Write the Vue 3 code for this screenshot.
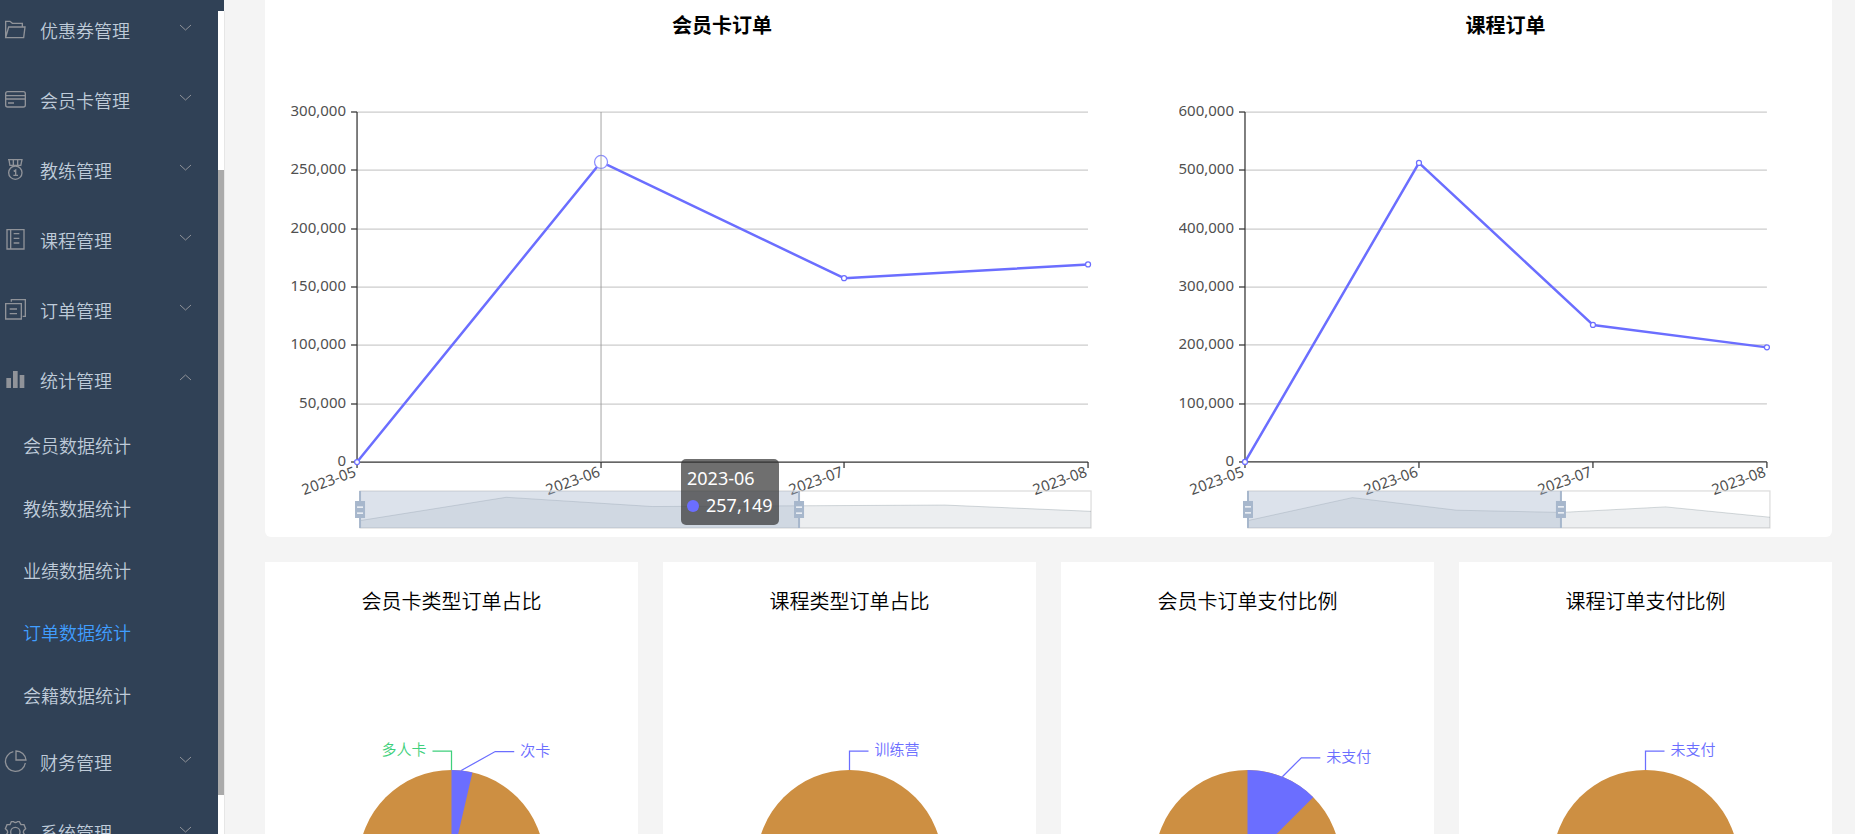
<script setup>
import { ref, computed, onMounted, onBeforeUnmount } from 'vue'

const groups = [
  { name: '优惠券管理', icon: 'folder' },
  { name: '会员卡管理', icon: 'card' },
  { name: '教练管理', icon: 'medal' },
  { name: '课程管理', icon: 'notebook' },
  { name: '订单管理', icon: 'documents' },
  {
    name: '统计管理',
    icon: 'bars',
    open: true,
    children: ['会员数据统计', '教练数据统计', '业绩数据统计', '订单数据统计', '会籍数据统计'],
  },
  { name: '财务管理', icon: 'pie' },
  { name: '系统管理', icon: 'gear' },
]
const activePage = '订单数据统计'

const months = ['2023-05', '2023-06', '2023-07', '2023-08']

const lineCharts = [
  {
    title: '会员卡订单',
    max: 300000,
    values: [0, 257149, 157600, 169300],
    overview: [0.2, 0.83, 0.58, 0.6, 0.62, 0.45],
    hover: 1,
  },
  {
    title: '课程订单',
    max: 600000,
    values: [0, 512700, 235000, 196500],
    overview: [0.2, 0.82, 0.48, 0.42, 0.57, 0.29],
    hover: -1,
  },
]

const BLUE = '#6b6eff'
const GREEN = '#3fd07c'
const pieCharts = [
  {
    title: '会员卡类型订单占比',
    share: 13,
    labels: [
      { text: '多人卡', color: GREEN, angle: 0, left: true },
      { text: '次卡', color: BLUE, angle: 6, reach: 34 },
    ],
  },
  { title: '课程类型订单占比', share: 0, labels: [{ text: '训练营', color: BLUE, angle: 0 }] },
  { title: '会员卡订单支付比例', share: 45, labels: [{ text: '未支付', color: BLUE, angle: 22, reach: 19 }] },
  { title: '课程订单支付比例', share: 0, labels: [{ text: '未支付', color: BLUE, angle: 0 }] },
]

const TOP = 73
const BOTTOM = 423
const SLIDER_TOP = 452
const SLIDER_HEIGHT = 37

const plotsWidth = ref(1567)
const plots = ref(null)
let observer
onMounted(() => {
  const measure = () => {
    plotsWidth.value = plots.value.clientWidth
  }
  measure()
  observer = new ResizeObserver(measure)
  observer.observe(plots.value)
})
onBeforeUnmount(() => observer.disconnect())

const lines = computed(() =>
  lineCharts.map((chart, index) => {
    const width = Math.round((plotsWidth.value * (index ? 5 : 7)) / 12)
    const left = Math.ceil(width / 10)
    const span = Math.round(width * 0.8)
    const right = left + span
    const points = chart.values.map((value, i) => ({
      x: Math.round(left + (span * i) / 3),
      y: BOTTOM - (value / chart.max) * (BOTTOM - TOP),
    }))
    const ticks = Array.from({ length: 7 }, (_, i) => ({
      text: ((chart.max / 6) * i).toLocaleString('en-US'),
      y: Math.round(BOTTOM - ((BOTTOM - TOP) * i) / 6),
    }))
    const sliderLeft = left + 3
    const bottom = SLIDER_TOP + SLIDER_HEIGHT
    const shape = chart.overview.map(
      (v, i) => `${sliderLeft + (span * i) / 5},${bottom - v * SLIDER_HEIGHT}`,
    )
    return {
      ...chart,
      width,
      left,
      right,
      span,
      points,
      ticks,
      sliderLeft,
      handles: [sliderLeft, Math.round(sliderLeft + span * 0.6)],
      path: points.map((p) => `${p.x},${p.y}`).join(' '),
      shape: shape.join(' '),
      area: `${sliderLeft},${bottom} ${shape.join(' ')} ${sliderLeft + span},${bottom}`,
    }
  }),
)

const RADIUS = 93
const PIE_Y = 248
const pies = computed(() => {
  const width = (plotsWidth.value - 75) / 4
  const cx = width / 2
  const edge = (angle) => {
    const a = (angle * Math.PI) / 180
    return { x: cx + RADIUS * Math.sin(a), y: PIE_Y - RADIUS * Math.cos(a) }
  }
  return pieCharts.map((pie) => {
    const end = edge(pie.share)
    return {
      ...pie,
      width,
      cx,
      slice: `M${cx} ${PIE_Y}V${PIE_Y - RADIUS}A${RADIUS} ${RADIUS} 0 0 1 ${end.x} ${end.y}Z`,
      labels: pie.labels.map((label) => {
        const start = edge(label.angle)
        const elbowX = start.x + (label.reach || 0)
        const elbowY = start.y - 19
        const stub = label.left ? -19 : 19
        return {
          ...label,
          line: `${start.x},${start.y} ${elbowX},${elbowY} ${elbowX + stub},${elbowY}`,
          x: elbowX + stub + (label.left ? -6 : 6),
          y: elbowY + 4,
        }
      }),
    }
  })
})
</script>

<template>
  <div class="shell">
    <aside class="sidebar">
      <nav class="menu">
        <div v-for="group in groups" :key="group.name">
          <button class="group" type="button" :aria-expanded="!!group.open">
            <svg class="icon" viewBox="0 0 72 72" aria-hidden="true">
              <g v-if="group.icon === 'folder'">
                <path d="M5 59V10H18L25 16H55V26M5 59L14 27H63L59 59Z" />
              </g>
              <g v-else-if="group.icon === 'card'">
                <rect x="5" y="11" width="59" height="46" rx="6" />
                <path d="M5 23H64M5 33H64M12 45H30" />
              </g>
              <g v-else-if="group.icon === 'medal'">
                <path d="M12 5H56M15 5L18 24M54 5L50 24M28 5V21M41 5V21M18 22H50M29 40L35 36V52M28 52H42" />
                <circle cx="34" cy="44" r="20" />
              </g>
              <g v-else-if="group.icon === 'notebook'">
                <path d="M9 5H60V63H9ZM20 5V63M29 17H46M29 31H46M29 45H46" />
              </g>
              <g v-else-if="group.icon === 'documents'">
                <path d="M22 11V5H64V55H56M5 17H52V63H5ZM17 33H39M17 47H39" />
              </g>
              <g v-else-if="group.icon === 'bars'" class="solid">
                <rect x="7" y="30" width="14" height="30" />
                <rect x="27" y="9" width="14" height="51" />
                <rect x="47" y="21" width="14" height="39" />
              </g>
              <g v-else-if="group.icon === 'pie'">
                <path d="M28 5A30 30 0 1 0 64 39M36 3V30H66A30 30 0 0 0 36 3Z" />
              </g>
              <g v-else>
                <path
                  d="M22 5H29Q34 10 40 5H46L51 14H60L65 26Q58 31 58 36Q58 41 65 46L60 58H51L46 67H40Q34 62 29 67H22L18 58H9L4 46Q11 41 11 36Q11 31 4 26L9 14H18Z"
                />
                <circle cx="34" cy="36" r="14" />
              </g>
            </svg>
            <span class="group-name">{{ group.name }}</span>
            <svg class="arrow" viewBox="0 0 15 15" aria-hidden="true">
              <path :d="group.open ? 'M2 10L7.5 5L13 10' : 'M2 5L7.5 10L13 5'" />
            </svg>
          </button>
          <div v-if="group.children" class="children">
            <a
              v-for="child in group.children"
              :key="child"
              class="child"
              :class="{ active: child === activePage }"
              href="#"
              >{{ child }}</a
            >
          </div>
        </div>
      </nav>
      <div class="gutter">
        <div class="track"><div class="thumb"></div></div>
      </div>
    </aside>

    <main class="content">
      <section ref="plots" class="plots">
        <article v-for="chart in lines" :key="chart.title" class="plot">
          <h2 class="plot-title">{{ chart.title }}</h2>
          <svg class="plot-canvas" :viewBox="`0 0 ${chart.width} 498`" role="img" :aria-label="chart.title">
            <line
              v-for="tick in chart.ticks.slice(1)"
              :key="tick.text"
              class="grid-line"
              :x1="chart.left"
              :x2="chart.right"
              :y1="tick.y"
              :y2="tick.y"
            />
            <g v-for="tick in chart.ticks" :key="'t' + tick.text">
              <line class="axis" :x1="chart.left - 6" :x2="chart.left" :y1="tick.y" :y2="tick.y" />
              <text class="tick-text" text-anchor="end" :x="chart.left - 11" :y="tick.y + 4">{{ tick.text }}</text>
            </g>
            <line class="axis" :x1="chart.left" :x2="chart.left" :y1="TOP" :y2="BOTTOM" />
            <line class="axis" :x1="chart.left" :x2="chart.right" :y1="BOTTOM" :y2="BOTTOM" />
            <g v-for="(month, i) in months" :key="month">
              <line class="axis" :x1="chart.points[i].x" :x2="chart.points[i].x" :y1="BOTTOM" :y2="BOTTOM + 6" />
              <text
                class="tick-text"
                text-anchor="end"
                :transform="`translate(${chart.points[i].x} ${BOTTOM + 14}) rotate(-20)`"
              >
                {{ month }}
              </text>
            </g>

            <polyline class="series" :points="chart.path" />
            <circle
              v-for="(point, i) in chart.points"
              :key="i"
              :class="['dot', { large: i === chart.hover }]"
              :cx="point.x"
              :cy="point.y"
              :r="i === chart.hover ? 6.5 : 2.5"
            />
            <line
              v-if="chart.hover >= 0"
              class="pointer"
              :x1="chart.points[chart.hover].x"
              :x2="chart.points[chart.hover].x"
              :y1="TOP"
              :y2="BOTTOM"
            />

            <rect class="slider-frame" :x="chart.sliderLeft" :y="SLIDER_TOP" :width="chart.span" :height="SLIDER_HEIGHT" />
            <polygon class="overview-area" :points="chart.area" />
            <polyline class="overview-line" :points="chart.shape" />
            <rect
              class="slider-range"
              :x="chart.sliderLeft"
              :y="SLIDER_TOP"
              :width="chart.handles[1] - chart.handles[0]"
              :height="SLIDER_HEIGHT"
            />
            <g v-for="x in chart.handles" :key="'h' + x">
              <rect class="handle" :x="x - 1" :y="SLIDER_TOP" width="2" :height="SLIDER_HEIGHT" />
              <rect class="handle" :x="x - 5" :y="SLIDER_TOP + 10" width="10" height="17" />
              <path class="grip" :d="`M${x - 3} ${SLIDER_TOP + 16}h6m-6 6h6`" />
            </g>
          </svg>
          <div v-if="chart.hover >= 0" class="tooltip" :style="{ left: chart.points[chart.hover].x + 80 + 'px' }">
            <div>{{ months[chart.hover] }}</div>
            <div class="tooltip-row">
              <span class="marker"></span>{{ chart.values[chart.hover].toLocaleString('en-US') }}
            </div>
          </div>
        </article>
      </section>

      <section class="pies">
        <article v-for="pie in pies" :key="pie.title" class="pie-card">
          <h2 class="pie-title">{{ pie.title }}</h2>
          <svg class="pie-canvas" :viewBox="`0 0 ${pie.width} 500`" role="img" :aria-label="pie.title">
            <circle class="pie-base" :cx="pie.cx" :cy="PIE_Y" :r="RADIUS" />
            <path v-if="pie.share" class="pie-slice" :d="pie.slice" />
            <g v-for="label in pie.labels" :key="label.text">
              <polyline class="leader" :points="label.line" :stroke="label.color" />
              <text
                class="pie-text"
                :text-anchor="label.left ? 'end' : 'start'"
                :x="label.x"
                :y="label.y"
                :fill="label.color"
              >
                {{ label.text }}
              </text>
            </g>
          </svg>
        </article>
      </section>
    </main>
  </div>
</template>

<style>
body {
  background: #f4f4f4;
}
</style>

<style scoped>
.shell {
  display: flex;
  height: 100vh;
  overflow: hidden;
  background: #f4f4f4;
  font-family: 'Noto Sans', 'Noto Sans CJK SC', sans-serif;
}

.sidebar {
  display: flex;
  flex: none;
  width: 224px;
  background: #304156;
}

.menu {
  flex: 1;
  margin-top: -5px;
}

.group {
  display: flex;
  align-items: center;
  width: 100%;
  height: 70px;
  padding: 0 25px 0 4px;
  border: 0;
  background: none;
  color: #bfcbd9;
  font-family: 'Noto Sans CJK SC', sans-serif;
  font-size: 18px;
  font-weight: 350;
  text-align: left;
  cursor: pointer;
}

.icon {
  flex: none;
  width: 24px;
  height: 24px;
  margin-right: 12px;
  fill: none;
  stroke: #909399;
  stroke-width: 4;
}

.solid {
  fill: #909399;
  stroke: none;
}

.group-name {
  flex: 1;
}

.arrow {
  width: 15px;
  height: 15px;
  margin-bottom: 6px;
  fill: none;
  stroke: #909399;
}

.children {
  display: grid;
  grid-auto-rows: 1fr;
  height: 312px;
  margin: -1px 0 1px;
}

.child {
  display: flex;
  align-items: center;
  padding-left: 23px;
  color: #bfcbd9;
  font-family: 'Noto Sans CJK SC', sans-serif;
  font-size: 18px;
  font-weight: 350;
  text-decoration: none;
}

.child.active {
  color: #409eff;
}

.gutter {
  display: flex;
  width: 6px;
  padding-top: 11px;
}

.track {
  flex: 1;
  padding-top: 159px;
  background: #fff;
  box-shadow: 1px 0 #e6e6e6;
}

.thumb {
  height: 625px;
  background: #aaa;
}

.content {
  display: flex;
  flex: 1;
  flex-direction: column;
  gap: 25px;
  min-width: 0;
  padding: 0 23px 0 41px;
}

.plots {
  display: grid;
  flex: none;
  grid-template-columns: 7fr 5fr;
  border-radius: 0 0 6px 6px;
  background: #fff;
}

.plot {
  position: relative;
  min-width: 0;
  padding-top: 11px;
}

.plot-title,
.pie-title {
  margin: 0;
  color: #000;
  font-family: 'Noto Sans CJK SC', sans-serif;
  font-size: 20px;
  line-height: 28px;
  text-align: center;
}

.pie-title {
  font-weight: 350;
}

.plot-canvas {
  display: block;
  width: 100%;
  height: 498px;
}

.grid-line {
  stroke: #ccc;
  stroke-width: 1.25;
}

.axis {
  stroke: #333;
  stroke-width: 1.25;
}

.tick-text {
  fill: #505050;
  font-size: 15px;
}

.series {
  fill: none;
  stroke: #6b6eff;
  stroke-width: 2.5;
  stroke-linejoin: bevel;
}

.dot {
  fill: #fff;
  stroke: #6b6eff;
  stroke-width: 1.25;
}

.dot.large {
  stroke: #8c8eff;
}

.pointer {
  stroke: #999;
  stroke-width: 1.25;
  opacity: 0.7;
}

.slider-frame {
  fill: none;
  stroke: #ddd;
  stroke-width: 1.25;
}

.overview-area {
  fill: #2f4554;
  opacity: 0.09;
}

.overview-line {
  fill: none;
  stroke: #2f4554;
  opacity: 0.2;
}

.slider-range {
  fill: #a7b7cc;
  opacity: 0.4;
}

.handle {
  fill: #a7b7cc;
}

.grip {
  fill: none;
  stroke: #fff;
  stroke-width: 1.25;
}

.tooltip {
  position: absolute;
  top: 459px;
  padding: 6px;
  border-radius: 5px;
  background: rgba(50, 50, 50, 0.7);
  color: #fff;
  font-size: 18px;
  line-height: 27px;
  white-space: nowrap;
}

.tooltip-row {
  display: flex;
  align-items: center;
}

.marker {
  width: 12px;
  height: 12px;
  margin-right: 7px;
  border-radius: 50%;
  background: #6b6eff;
}

.pies {
  display: grid;
  flex: none;
  grid-template-columns: repeat(4, 1fr);
  gap: 25px;
}

.pie-card {
  min-width: 0;
  padding-top: 25px;
  background: #fff;
}

.pie-canvas {
  display: block;
  width: 100%;
  height: 500px;
}

.pie-base {
  fill: #cd8f42;
}

.pie-slice {
  fill: #6b6eff;
}

.leader {
  fill: none;
  stroke-width: 1.25;
}

.pie-text {
  font-family: 'Noto Sans CJK SC', sans-serif;
  font-size: 15px;
  font-weight: 350;
}
</style>
